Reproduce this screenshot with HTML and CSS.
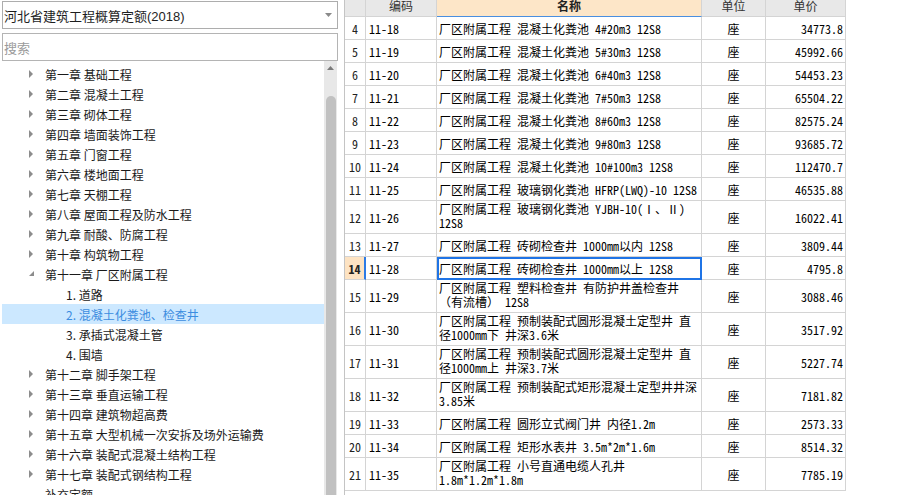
FILE: index.html
```html
<!DOCTYPE html>
<html lang="zh-CN">
<head>
<meta charset="utf-8">
<title>定额</title>
<link rel="stylesheet" href="styles.css">
</head>
<body>
<div class="app">
  <aside class="side">
    <div class="combo">
      <span>河北省建筑工程概算定额(2018)</span>
      <svg class="caret" width="7" height="4" viewBox="0 0 7 4"><path d="M0 0H7L3.5 4Z" fill="#8a8a8a"/></svg>
    </div>
    <div class="search">搜索</div>
    <div class="treebox">
      <div class="tree">
        <div class="node"><span class="tw"><svg width="5" height="8" viewBox="0 0 5 8"><path d="M0 0L4 4L0 8Z" fill="#8c8c8c"/></svg></span>第一章 基础工程</div>
        <div class="node"><span class="tw"><svg width="5" height="8" viewBox="0 0 5 8"><path d="M0 0L4 4L0 8Z" fill="#8c8c8c"/></svg></span>第二章 混凝土工程</div>
        <div class="node"><span class="tw"><svg width="5" height="8" viewBox="0 0 5 8"><path d="M0 0L4 4L0 8Z" fill="#8c8c8c"/></svg></span>第三章 砌体工程</div>
        <div class="node"><span class="tw"><svg width="5" height="8" viewBox="0 0 5 8"><path d="M0 0L4 4L0 8Z" fill="#8c8c8c"/></svg></span>第四章 墙面装饰工程</div>
        <div class="node"><span class="tw"><svg width="5" height="8" viewBox="0 0 5 8"><path d="M0 0L4 4L0 8Z" fill="#8c8c8c"/></svg></span>第五章 门窗工程</div>
        <div class="node"><span class="tw"><svg width="5" height="8" viewBox="0 0 5 8"><path d="M0 0L4 4L0 8Z" fill="#8c8c8c"/></svg></span>第六章 楼地面工程</div>
        <div class="node"><span class="tw"><svg width="5" height="8" viewBox="0 0 5 8"><path d="M0 0L4 4L0 8Z" fill="#8c8c8c"/></svg></span>第七章 天棚工程</div>
        <div class="node"><span class="tw"><svg width="5" height="8" viewBox="0 0 5 8"><path d="M0 0L4 4L0 8Z" fill="#8c8c8c"/></svg></span>第八章 屋面工程及防水工程</div>
        <div class="node"><span class="tw"><svg width="5" height="8" viewBox="0 0 5 8"><path d="M0 0L4 4L0 8Z" fill="#8c8c8c"/></svg></span>第九章 耐酸、防腐工程</div>
        <div class="node"><span class="tw"><svg width="5" height="8" viewBox="0 0 5 8"><path d="M0 0L4 4L0 8Z" fill="#8c8c8c"/></svg></span>第十章 构筑物工程</div>
        <div class="node"><span class="tw"><svg width="6" height="6" viewBox="0 0 6 6"><path d="M5 0V5H0Z" fill="#8c8c8c"/></svg></span>第十一章 厂区附属工程</div>
        <div class="node leaf">1. 道路</div>
        <div class="node leaf sel">2. 混凝土化粪池、检查井</div>
        <div class="node leaf">3. 承插式混凝土管</div>
        <div class="node leaf">4. 围墙</div>
        <div class="node"><span class="tw"><svg width="5" height="8" viewBox="0 0 5 8"><path d="M0 0L4 4L0 8Z" fill="#8c8c8c"/></svg></span>第十二章 脚手架工程</div>
        <div class="node"><span class="tw"><svg width="5" height="8" viewBox="0 0 5 8"><path d="M0 0L4 4L0 8Z" fill="#8c8c8c"/></svg></span>第十三章 垂直运输工程</div>
        <div class="node"><span class="tw"><svg width="5" height="8" viewBox="0 0 5 8"><path d="M0 0L4 4L0 8Z" fill="#8c8c8c"/></svg></span>第十四章 建筑物超高费</div>
        <div class="node"><span class="tw"><svg width="5" height="8" viewBox="0 0 5 8"><path d="M0 0L4 4L0 8Z" fill="#8c8c8c"/></svg></span>第十五章 大型机械一次安拆及场外运输费</div>
        <div class="node"><span class="tw"><svg width="5" height="8" viewBox="0 0 5 8"><path d="M0 0L4 4L0 8Z" fill="#8c8c8c"/></svg></span>第十六章 装配式混凝土结构工程</div>
        <div class="node"><span class="tw"><svg width="5" height="8" viewBox="0 0 5 8"><path d="M0 0L4 4L0 8Z" fill="#8c8c8c"/></svg></span>第十七章 装配式钢结构工程</div>
        <div class="node"><span class="tw"></span>补充定额</div>
      </div>
      <div class="scroll">
        <div class="sb-up"><svg width="7" height="4" viewBox="0 0 7 4"><path d="M3.5 0L7 4H0Z" fill="#7a7a7a"/></svg></div>
        <div class="thumb"></div>
      </div>
    </div>
  </aside>

  <main class="grid">
    <div class="row hd">
      <div class="c"></div>
      <div class="c hc">编码</div>
      <div class="c hc hsel">名称</div>
      <div class="c hc">单位</div>
      <div class="c hc">单价</div>
    </div>
    <div class="row"><div class="c num">4</div><div class="c code">11-18</div><div class="c name">厂区附属工程 混凝土化粪池 4#20m3 12S8</div><div class="c unit">座</div><div class="c price">34773.8</div></div>
    <div class="row"><div class="c num">5</div><div class="c code">11-19</div><div class="c name">厂区附属工程 混凝土化粪池 5#30m3 12S8</div><div class="c unit">座</div><div class="c price">45992.66</div></div>
    <div class="row"><div class="c num">6</div><div class="c code">11-20</div><div class="c name">厂区附属工程 混凝土化粪池 6#40m3 12S8</div><div class="c unit">座</div><div class="c price">54453.23</div></div>
    <div class="row"><div class="c num">7</div><div class="c code">11-21</div><div class="c name">厂区附属工程 混凝土化粪池 7#50m3 12S8</div><div class="c unit">座</div><div class="c price">65504.22</div></div>
    <div class="row"><div class="c num">8</div><div class="c code">11-22</div><div class="c name">厂区附属工程 混凝土化粪池 8#60m3 12S8</div><div class="c unit">座</div><div class="c price">82575.24</div></div>
    <div class="row"><div class="c num">9</div><div class="c code">11-23</div><div class="c name">厂区附属工程 混凝土化粪池 9#80m3 12S8</div><div class="c unit">座</div><div class="c price">93685.72</div></div>
    <div class="row"><div class="c num">10</div><div class="c code">11-24</div><div class="c name">厂区附属工程 混凝土化粪池 10#100m3 12S8</div><div class="c unit">座</div><div class="c price">112470.7</div></div>
    <div class="row"><div class="c num">11</div><div class="c code">11-25</div><div class="c name">厂区附属工程 玻璃钢化粪池 HFRP(LWQ)-10 12S8</div><div class="c unit">座</div><div class="c price">46535.88</div></div>
    <div class="row two"><div class="c num">12</div><div class="c code">11-26</div><div class="c name">厂区附属工程 玻璃钢化粪池 YJBH-10(Ⅰ、Ⅱ)<br>12S8</div><div class="c unit">座</div><div class="c price">16022.41</div></div>
    <div class="row"><div class="c num">13</div><div class="c code">11-27</div><div class="c name">厂区附属工程 砖砌检查井 1000mm以内 12S8</div><div class="c unit">座</div><div class="c price">3809.44</div></div>
    <div class="row cur"><div class="c num">14</div><div class="c code">11-28</div><div class="c name">厂区附属工程 砖砌检查井 1000mm以上 12S8</div><div class="c unit">座</div><div class="c price">4795.8</div></div>
    <div class="row two"><div class="c num">15</div><div class="c code">11-29</div><div class="c name">厂区附属工程 塑料检查井 有防护井盖检查井<br>（有流槽） 12S8</div><div class="c unit">座</div><div class="c price">3088.46</div></div>
    <div class="row two"><div class="c num">16</div><div class="c code">11-30</div><div class="c name">厂区附属工程 预制装配式圆形混凝土定型井 直<br>径1000mm下 井深3.6米</div><div class="c unit">座</div><div class="c price">3517.92</div></div>
    <div class="row two"><div class="c num">17</div><div class="c code">11-31</div><div class="c name">厂区附属工程 预制装配式圆形混凝土定型井 直<br>径1000mm上 井深3.7米</div><div class="c unit">座</div><div class="c price">5227.74</div></div>
    <div class="row two"><div class="c num">18</div><div class="c code">11-32</div><div class="c name">厂区附属工程 预制装配式矩形混凝土定型井井深<br>3.85米</div><div class="c unit">座</div><div class="c price">7181.82</div></div>
    <div class="row"><div class="c num">19</div><div class="c code">11-33</div><div class="c name">厂区附属工程 圆形立式阀门井 内径1.2m</div><div class="c unit">座</div><div class="c price">2573.33</div></div>
    <div class="row"><div class="c num">20</div><div class="c code">11-34</div><div class="c name">厂区附属工程 矩形水表井 3.5m*2m*1.6m</div><div class="c unit">座</div><div class="c price">8514.32</div></div>
    <div class="row two"><div class="c num">21</div><div class="c code">11-35</div><div class="c name">厂区附属工程 小号直通电缆人孔井<br>1.8m*1.2m*1.8m</div><div class="c unit">座</div><div class="c price">7785.19</div></div>
  </main>
</div>
</body>
</html>
```
FILE: styles.css
```css
* { box-sizing: border-box; }
html, body { margin: 0; padding: 0; background: #fff; }
body {
  width: 921px;
  height: 495px;
  overflow: hidden;
  font-family: "Noto Sans CJK SC", "Liberation Sans", sans-serif;
}
.app { display: flex; height: 495px; }

/* left panel */
.side {
  width: 336px;
  margin-left: 2px;
  display: flex;
  flex-direction: column;
  height: 495px;
}
.combo {
  margin-top: 1px;
  height: 28px;
  border: 1px solid #adadad;
  display: flex;
  align-items: center;
  justify-content: space-between;
  padding: 0 5px 0 1px;
  font-family: "Liberation Sans", "Noto Sans CJK SC", sans-serif;
  font-size: 13px;
  color: #1e1e1e;
  white-space: nowrap;
}
.caret { display: block; }
.search {
  margin-top: 4px;
  height: 28px;
  border: 1px solid #b4b4b4;
  padding-left: 1px;
  display: flex;
  align-items: center;
  font-size: 13px;
  color: #9b9b9b;
}
.treebox { flex: 1; display: flex; min-height: 0; }
.tree { flex: 1; padding-top: 3px; overflow: hidden; }
.node {
  height: 20px;
  display: flex;
  align-items: center;
  font-size: 12px;
  color: #1a1a1a;
  white-space: nowrap;
}
.tw {
  width: 16px;
  margin-left: 27px;
  display: flex;
  align-items: center;
}
.tw svg { display: block; }
.leaf { padding-left: 64px; }
.sel { background: #cce8ff; color: #3c8de0; }

.scroll {
  width: 13px;
  margin-right: 1px;
  background: #e8e8e8;
  display: flex;
  flex-direction: column;
  align-items: center;
}
.sb-up { height: 17px; padding-top: 5px; }
.sb-up svg { display: block; }
.thumb {
  flex: 1;
  width: 10px;
  margin-top: 18px;
  background: #c1c1c1;
  border-radius: 5px 5px 0 0;
}

/* right grid */
.grid {
  margin-left: 6px;
  height: 495px;
  border-left: 1px solid #c4c4c4;
  overflow: hidden;
  font-family: "Noto Sans Mono CJK SC", "Noto Sans CJK SC", "Liberation Mono", monospace;
  font-size: 12px;
  color: #000;
}
.row {
  display: grid;
  grid-template-columns: 21px 71px 265px 64px 80px;
  height: 23px;
}
.row.two { height: 33px; }
.c {
  border-right: 1px solid #d4d4d4;
  border-bottom: 1px solid #d4d4d4;
  display: flex;
  align-items: center;
  white-space: nowrap;
  overflow: hidden;
}
.row.hd { height: 17px; }
.hd .c {
  background: #e8e8e8;
  font-family: "Noto Sans CJK SC", sans-serif;
  color: #333;
  font-size: 12px;
  line-height: 12px;
  align-items: flex-start;
  justify-content: center;
}
.hd .hsel {
  background: #fde6c8;
  font-weight: bold;
  color: #222;
  border-bottom: 1px solid #4a8fe0;
}
.num { justify-content: center; color: #222; }
.code { padding-left: 3px; }
.name { padding-left: 2px; }
.two .name {
  align-items: flex-start;
  padding-top: 1px;
  line-height: 14px;
}
.unit { justify-content: center; }
.price { justify-content: flex-end; padding-right: 2px; }

.cur .num {
  background: #fde3c3;
  font-weight: bold;
  border-right: 2px solid #2c7be5;
}
.cur .name {
  outline: 2px solid #1f74e6;
  outline-offset: -2px;
}
```
